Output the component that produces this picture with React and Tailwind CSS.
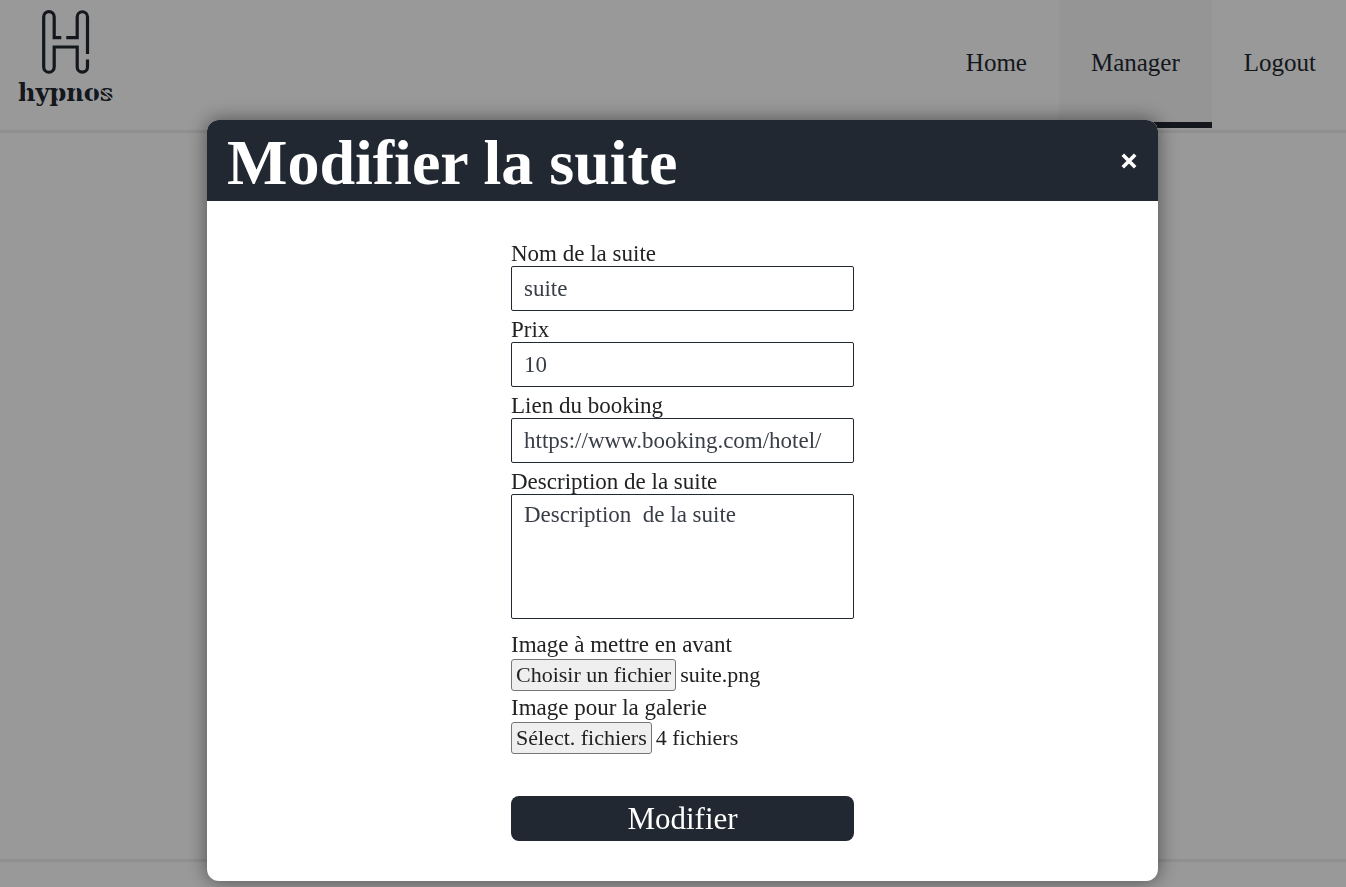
import { useRef, useState } from "react";

function Logo() {
  return (
    <svg viewBox="0 0 100 104" className="h-[104px] w-[100px]" role="img" aria-label="hypnos">
      <g fill="none" stroke="#222831" strokeWidth="3.2">
        <path d="M45.300 32.600H38.200V11.900a5.250 5.250 0 0 0 -10.500 0V62a5.250 5.250 0 0 0 10.500 0V42H61.200V62a5.150 5.150 0 0 0 10.300 0V54.500" />
        <path d="M50.300 32.600H61.200V11.900a5.150 5.150 0 0 1 10.300 0V49" />
      </g>
      <text x="2" y="96" fontFamily="DejaVu Serif, serif" fontWeight="700" fontSize="24" fill="#222831">
        hypnos
      </text>
      <g stroke="#fff" strokeWidth="1.500">
        <path d="M10 82V97M42.500 82V103M60 82V97M77.500 82V97M86 85L97 95" />
      </g>
    </svg>
  );
}

function Field({ id, label, ...props }) {
  return (
    <div className="mb-[7px] flex flex-col">
      <label htmlFor={id} className="leading-6">{label}</label>
      <input
        id={id}
        className="h-[45px] w-full rounded-xs border border-[#222831] px-3 text-[#393e46] outline-none"
        {...props}
      />
    </div>
  );
}

function FileField({ id, label, action, summary, multiple }) {
  const input = useRef(null);
  const [chosen, setChosen] = useState(summary);
  const update = (event) => {
    const files = event.target.files;
    if (files.length) setChosen(files.length > 1 ? `${files.length} fichiers` : files[0].name);
  };
  return (
    <div className="flex flex-col">
      <label htmlFor={id} className="leading-7">{label}</label>
      <input ref={input} id={id} type="file" multiple={multiple} onChange={update} tabIndex={-1} className="sr-only" />
      <div className="mb-[3px] flex items-center gap-1 text-[22px]">
        <button
          type="button"
          onClick={() => input.current.click()}
          className="h-8 rounded-[3px] border border-[#767676] bg-[#efefef] px-1 leading-7 text-[#222]"
        >
          {action}
        </button>
        <span className="leading-7 text-[#222]">{chosen}</span>
      </div>
    </div>
  );
}

export default function App() {
  const [open, setOpen] = useState(true);
  return (
    <div className="flex min-h-screen flex-col bg-white font-['Liberation_Serif',serif] text-[#222]">
      <header className="flex h-[133px] items-start justify-between border-b-3 border-[#eee]">
        <a href="#" className="pt-[5px] pl-4"><Logo /></a>
        <nav className="flex h-32 text-[25px] text-[#222831]">
          <a href="#home" className="flex items-center border-b-6 border-transparent px-8 pt-1">Home</a>
          <a href="#manager" className="flex items-center border-b-6 border-[#222831] bg-[#f8f8f8] px-8 pt-1">Manager</a>
          <a href="#logout" className="flex items-center border-b-6 border-transparent pt-1 pr-[30px] pl-8">Logout</a>
        </nav>
      </header>
      <main className="flex-1" />
      <footer className="h-7 border-t-3 border-[#eee]" />

      {open && (
        <div className="fixed inset-0 overflow-hidden bg-black/40 pt-[120px] pr-[188px] pl-[207px]">
          <section
            role="dialog"
            aria-modal="true"
            aria-labelledby="dialog-title"
            className="overflow-hidden rounded-xl bg-white shadow-[0_0_20px_rgba(0,0,0,0.5)]"
          >
            <div className="flex h-[81px] items-center justify-between bg-[#222831] px-5 text-white">
              <h1 id="dialog-title" className="pt-1 text-[64px] leading-none font-bold">Modifier la suite</h1>
              <button type="button" aria-label="Fermer" onClick={() => setOpen(false)} className="p-px">
                <svg viewBox="0 0 16 16" className="size-4" fill="none" stroke="currentColor" strokeWidth="3.600">
                  <path d="M1.800 1.800l12.400 12.400M14.200 1.800L1.800 14.200" />
                </svg>
              </button>
            </div>
            <form
              onSubmit={(event) => event.preventDefault()}
              className="mx-auto flex w-full max-w-[343px] flex-col pt-[41px] pb-10 text-[23px]"
            >
              <Field id="name" label="Nom de la suite" defaultValue="suite" />
              <Field id="price" label="Prix" defaultValue="10" />
              <Field id="booking" label="Lien du booking" defaultValue="https://www.booking.com/hotel/" />
              <div className="mb-3 flex flex-col">
                <label htmlFor="description" className="leading-6">Description de la suite</label>
                <textarea
                  id="description"
                  defaultValue="Description  de la suite"
                  className="h-[125px] resize-none rounded-xs border border-[#222831] px-3 py-[7px] leading-[26px] text-[#393e46] outline-none"
                />
              </div>
              <FileField id="cover" label="Image à mettre en avant" action="Choisir un fichier" summary="suite.png" />
              <FileField id="gallery" label="Image pour la galerie" action="Sélect. fichiers" summary="4 fichiers" multiple />
              <button type="submit" className="mt-[39px] h-[45px] rounded-lg bg-[#222831] text-[31px] leading-none text-white">
                Modifier
              </button>
            </form>
          </section>
        </div>
      )}
    </div>
  );
}
